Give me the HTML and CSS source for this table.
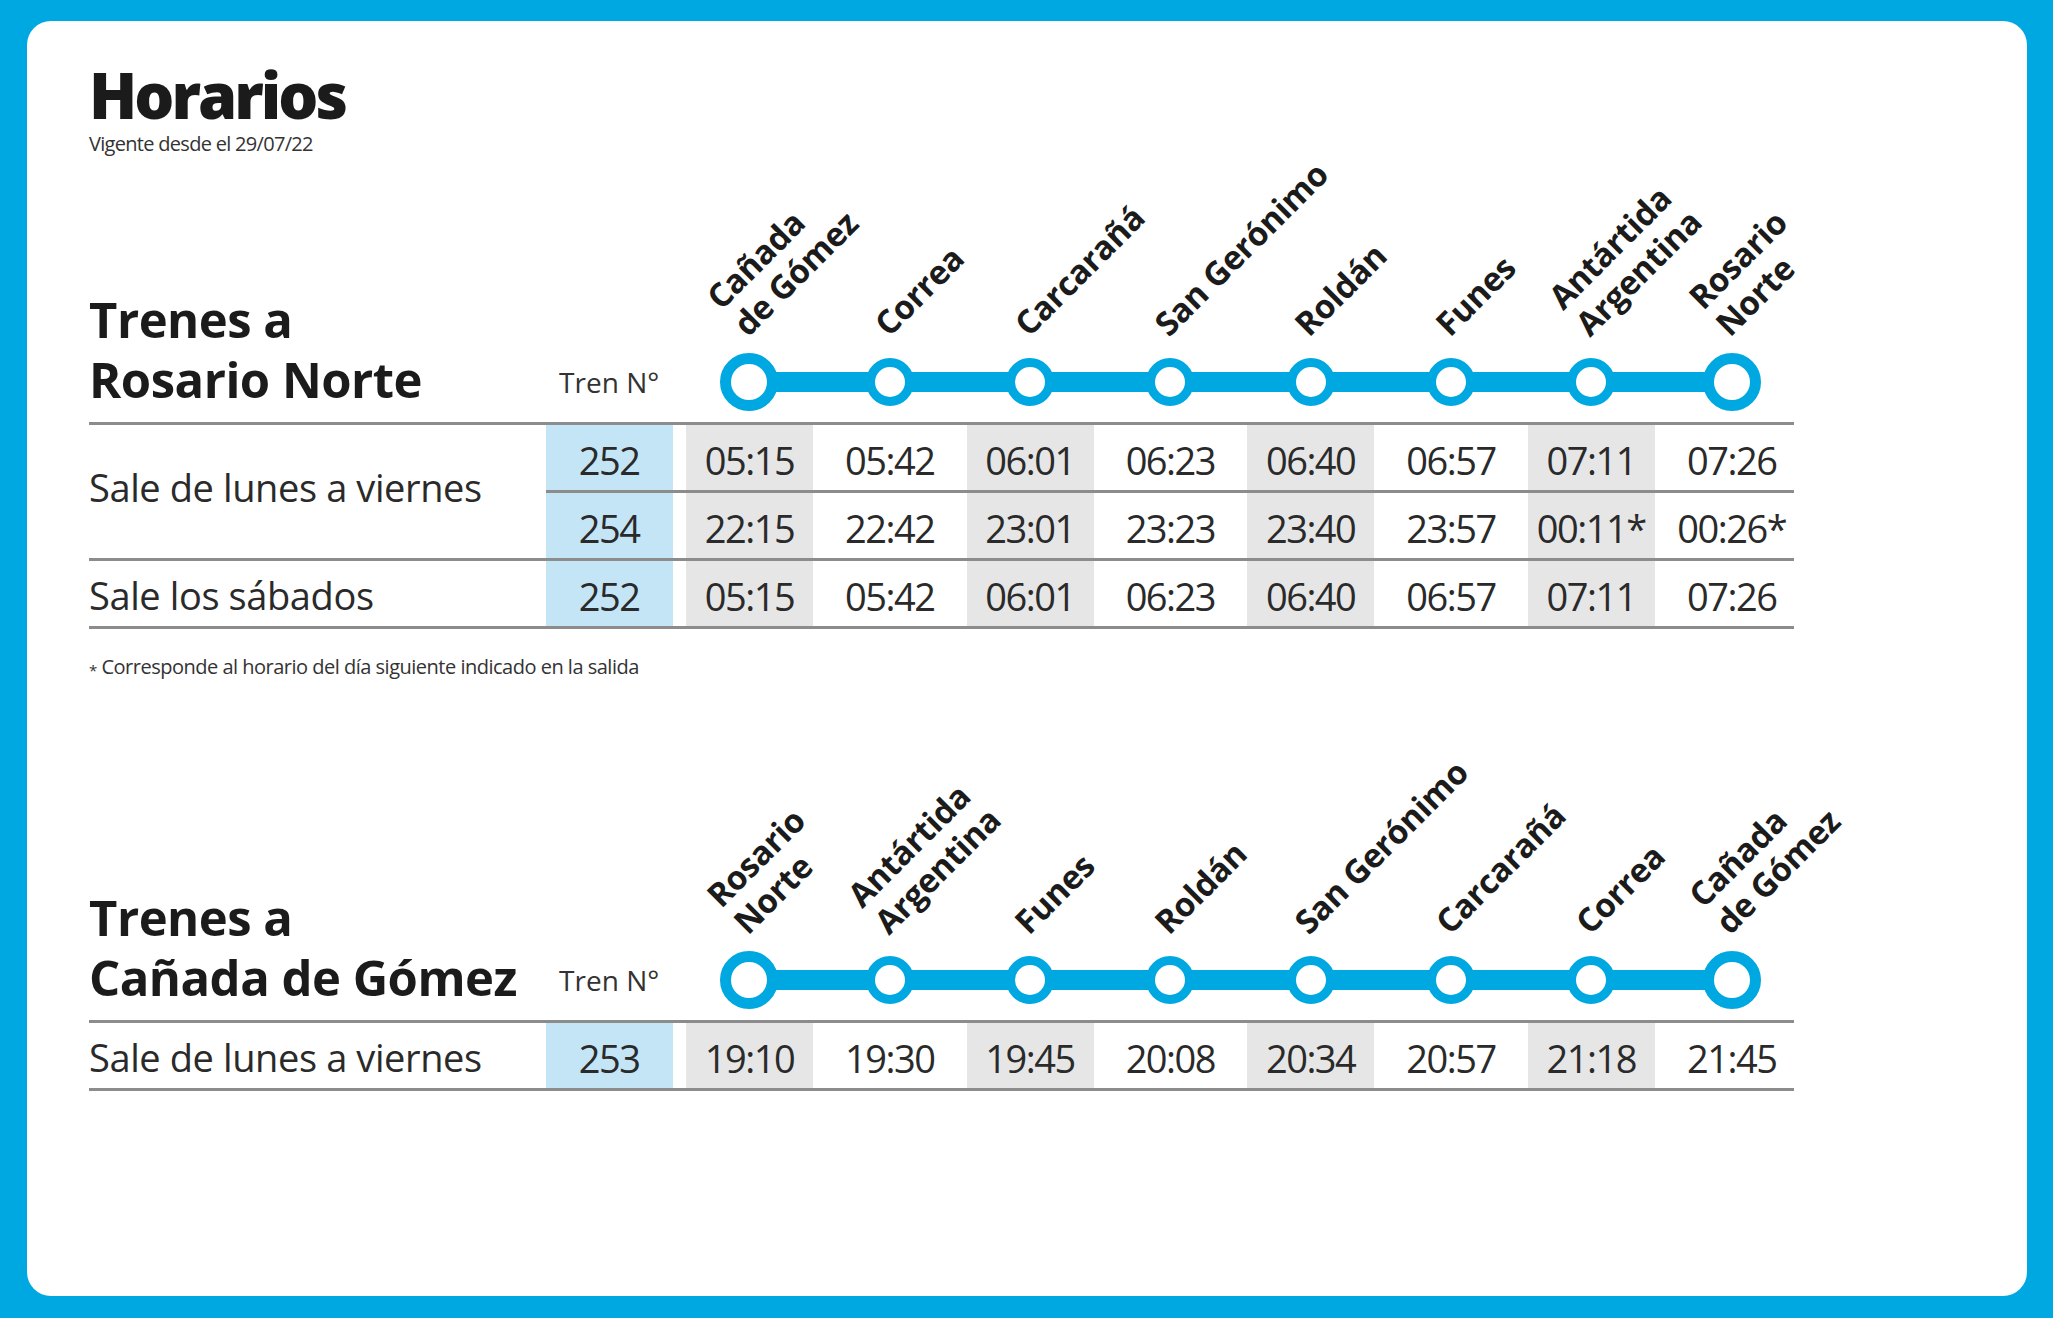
FILE: index.html
```html
<!DOCTYPE html>
<html lang="es">
<head>
<meta charset="utf-8">
<title>Horarios</title>
<link rel="stylesheet" href="styles.css">
</head>
<body>
<main class="card">
  <h1 class="title">Horarios</h1>
  <p class="subtitle">Vigente desde el 29/07/22</p>

  <section class="route">
    <div class="route-head">
      <h2 class="route-title">Trenes a<br>Rosario Norte</h2>
      <div class="tren-head">Tren N°</div>
      <ol class="stops">
        <li class="stop"><span class="stop-name">Cañada<br>de Gómez</span><span class="dot end"></span></li>
        <li class="stop"><span class="stop-name">Correa</span><span class="dot"></span></li>
        <li class="stop"><span class="stop-name">Carcarañá</span><span class="dot"></span></li>
        <li class="stop"><span class="stop-name">San Gerónimo</span><span class="dot"></span></li>
        <li class="stop"><span class="stop-name">Roldán</span><span class="dot"></span></li>
        <li class="stop"><span class="stop-name">Funes</span><span class="dot"></span></li>
        <li class="stop"><span class="stop-name">Antártida<br>Argentina</span><span class="dot"></span></li>
        <li class="stop"><span class="stop-name">Rosario<br>Norte</span><span class="dot end"></span></li>
      </ol>
    </div>
    <table class="sched">
      <colgroup>
        <col class="c-label"><col class="c-num"><col class="c-num"><col class="c-num"><col class="c-num"><col class="c-num"><col class="c-num"><col class="c-num"><col class="c-num"><col>
      </colgroup>
      <tbody>
        <tr class="r-top">
          <th rowspan="2" class="day">Sale de lunes a viernes</th>
          <td class="tren">252</td>
          <td class="alt">05:15</td><td>05:42</td><td class="alt">06:01</td><td>06:23</td><td class="alt">06:40</td><td>06:57</td><td class="alt">07:11</td><td class="last">07:26</td>
        </tr>
        <tr>
          <td class="tren">254</td>
          <td class="alt">22:15</td><td>22:42</td><td class="alt">23:01</td><td>23:23</td><td class="alt">23:40</td><td>23:57</td><td class="alt">00:11*</td><td class="last">00:26*</td>
        </tr>
        <tr>
          <th class="day">Sale los sábados</th>
          <td class="tren">252</td>
          <td class="alt">05:15</td><td>05:42</td><td class="alt">06:01</td><td>06:23</td><td class="alt">06:40</td><td>06:57</td><td class="alt">07:11</td><td class="last">07:26</td>
        </tr>
      </tbody>
    </table>
    <p class="note"><span class="star">*</span> Corresponde al horario del día siguiente indicado en la salida</p>
  </section>

  <section class="route route-back">
    <div class="route-head">
      <h2 class="route-title">Trenes a<br>Cañada de Gómez</h2>
      <div class="tren-head">Tren N°</div>
      <ol class="stops">
        <li class="stop"><span class="stop-name">Rosario<br>Norte</span><span class="dot end"></span></li>
        <li class="stop"><span class="stop-name">Antártida<br>Argentina</span><span class="dot"></span></li>
        <li class="stop"><span class="stop-name">Funes</span><span class="dot"></span></li>
        <li class="stop"><span class="stop-name">Roldán</span><span class="dot"></span></li>
        <li class="stop"><span class="stop-name">San Gerónimo</span><span class="dot"></span></li>
        <li class="stop"><span class="stop-name">Carcarañá</span><span class="dot"></span></li>
        <li class="stop"><span class="stop-name">Correa</span><span class="dot"></span></li>
        <li class="stop"><span class="stop-name">Cañada<br>de Gómez</span><span class="dot end"></span></li>
      </ol>
    </div>
    <table class="sched">
      <colgroup>
        <col class="c-label"><col class="c-num"><col class="c-num"><col class="c-num"><col class="c-num"><col class="c-num"><col class="c-num"><col class="c-num"><col class="c-num"><col>
      </colgroup>
      <tbody>
        <tr>
          <th class="day">Sale de lunes a viernes</th>
          <td class="tren">253</td>
          <td class="alt">19:10</td><td>19:30</td><td class="alt">19:45</td><td>20:08</td><td class="alt">20:34</td><td>20:57</td><td class="alt">21:18</td><td class="last">21:45</td>
        </tr>
      </tbody>
    </table>
  </section>
</main>
</body>
</html>
```
FILE: styles.css
```css
html, body {
  margin: 0;
  padding: 0;
}
body {
  background: #00a8e1;
  height: 1318px;
  overflow: hidden;
  font-family: "Open Sans", "Noto Sans", sans-serif;
  color: #2a2a2a;
}
.card {
  display: block;
  margin: 21px 0 0 27px;
  width: 2000px;
  height: 1275px;
  box-sizing: border-box;
  padding: 42px 0 0 62px;
  background: #fff;
  border-radius: 24px;
}
.title {
  margin: 0;
  font-size: 63px;
  line-height: 63px;
  font-weight: 800;
  color: #1b1b1b;
  letter-spacing: -3px;
}
.subtitle {
  margin: 8px 0 0;
  font-size: 20px;
  line-height: 20px;
  color: #333;
  letter-spacing: -0.7px;
}
.route {
  margin-top: 135px;
}
.route-back {
  margin-top: 207px;
}
.route-head {
  display: grid;
  grid-template-columns: 450px repeat(9, 140.3px);
  height: 133px;
}
.route-title {
  grid-column: 1;
  margin: 0;
  font-size: 49px;
  line-height: 60px;
  font-weight: 700;
  color: #1b1b1b;
  white-space: nowrap;
  letter-spacing: -0.5px;
}
.tren-head {
  grid-column: 2;
  padding-top: 79px;
  font-size: 28px;
  line-height: 28px;
  text-align: center;
  color: #333;
}
.stops {
  grid-column: 3 / span 8;
  display: grid;
  grid-template-columns: repeat(8, 1fr);
  margin: 0;
  padding: 0;
  list-style: none;
  background: linear-gradient(#00a8e1, #00a8e1) no-repeat;
  background-size: calc(100% - 140.3px) 20px;
  background-position: 50% 83px;
}
.stop {
  position: relative;
  display: flex;
  justify-content: center;
  align-items: flex-start;
}
.dot {
  display: block;
  margin-top: 69px;
  width: 48px;
  height: 48px;
  box-sizing: border-box;
  border: 9px solid #00a8e1;
  border-radius: 50%;
  background: #fff;
}
.dot.end {
  margin-top: 64px;
  width: 58px;
  height: 58px;
  border-width: 11px;
}
.stop-name {
  position: absolute;
  left: 74px;
  bottom: 79px;
  transform-origin: 0 100%;
  transform: rotate(-45deg);
  font-size: 33px;
  line-height: 38px;
  font-weight: 700;
  color: #1b1b1b;
  white-space: nowrap;
  letter-spacing: -0.3px;
}
.sched {
  width: 1705px;
  table-layout: fixed;
  border-collapse: separate;
  border-spacing: 0;
  border-top: 3px solid #8c8c8c;
}
.c-label { width: 450px; }
.c-num { width: 140.3px; }
.sched tr {
  height: 68px;
}
.sched th,
.sched td {
  padding: 0;
  border-bottom: 3px solid #8c8c8c;
  vertical-align: middle;
}
.sched th.day {
  text-align: left;
  font-weight: 400;
  font-size: 38px;
  line-height: 48px;
  letter-spacing: -0.4px;
  color: #2a2a2a;
  white-space: nowrap;
  padding-top: 3px;
}
.r-top th.day {
  padding-top: 0;
  padding-bottom: 10px;
}
.sched td {
  text-align: center;
  font-size: 38px;
  line-height: 48px;
  letter-spacing: -1.5px;
  color: #2a2a2a;
  white-space: nowrap;
  padding-top: 5px;
}
.sched td.tren {
  background: linear-gradient(#c4e5f6, #c4e5f6) center / 127px 100% no-repeat;
}
.sched td.alt {
  background: linear-gradient(#e6e6e6, #e6e6e6) center / 127px 100% no-repeat;
}
.sched td.last {
  padding-left: 8px;
}
.r-top td.tren {
  border-bottom: 0;
  padding-bottom: 3px;
  background:
    linear-gradient(#8c8c8c, #8c8c8c) right bottom / calc(100% - 6.6px) 3px no-repeat,
    linear-gradient(#c4e5f6, #c4e5f6) center / 127px 100% no-repeat;
}
.note {
  margin: 28px 0 0;
  font-size: 20px;
  line-height: 20px;
  color: #333;
  letter-spacing: -0.5px;
}
.star {
  font-size: 15px;
  vertical-align: -2px;
}
```
